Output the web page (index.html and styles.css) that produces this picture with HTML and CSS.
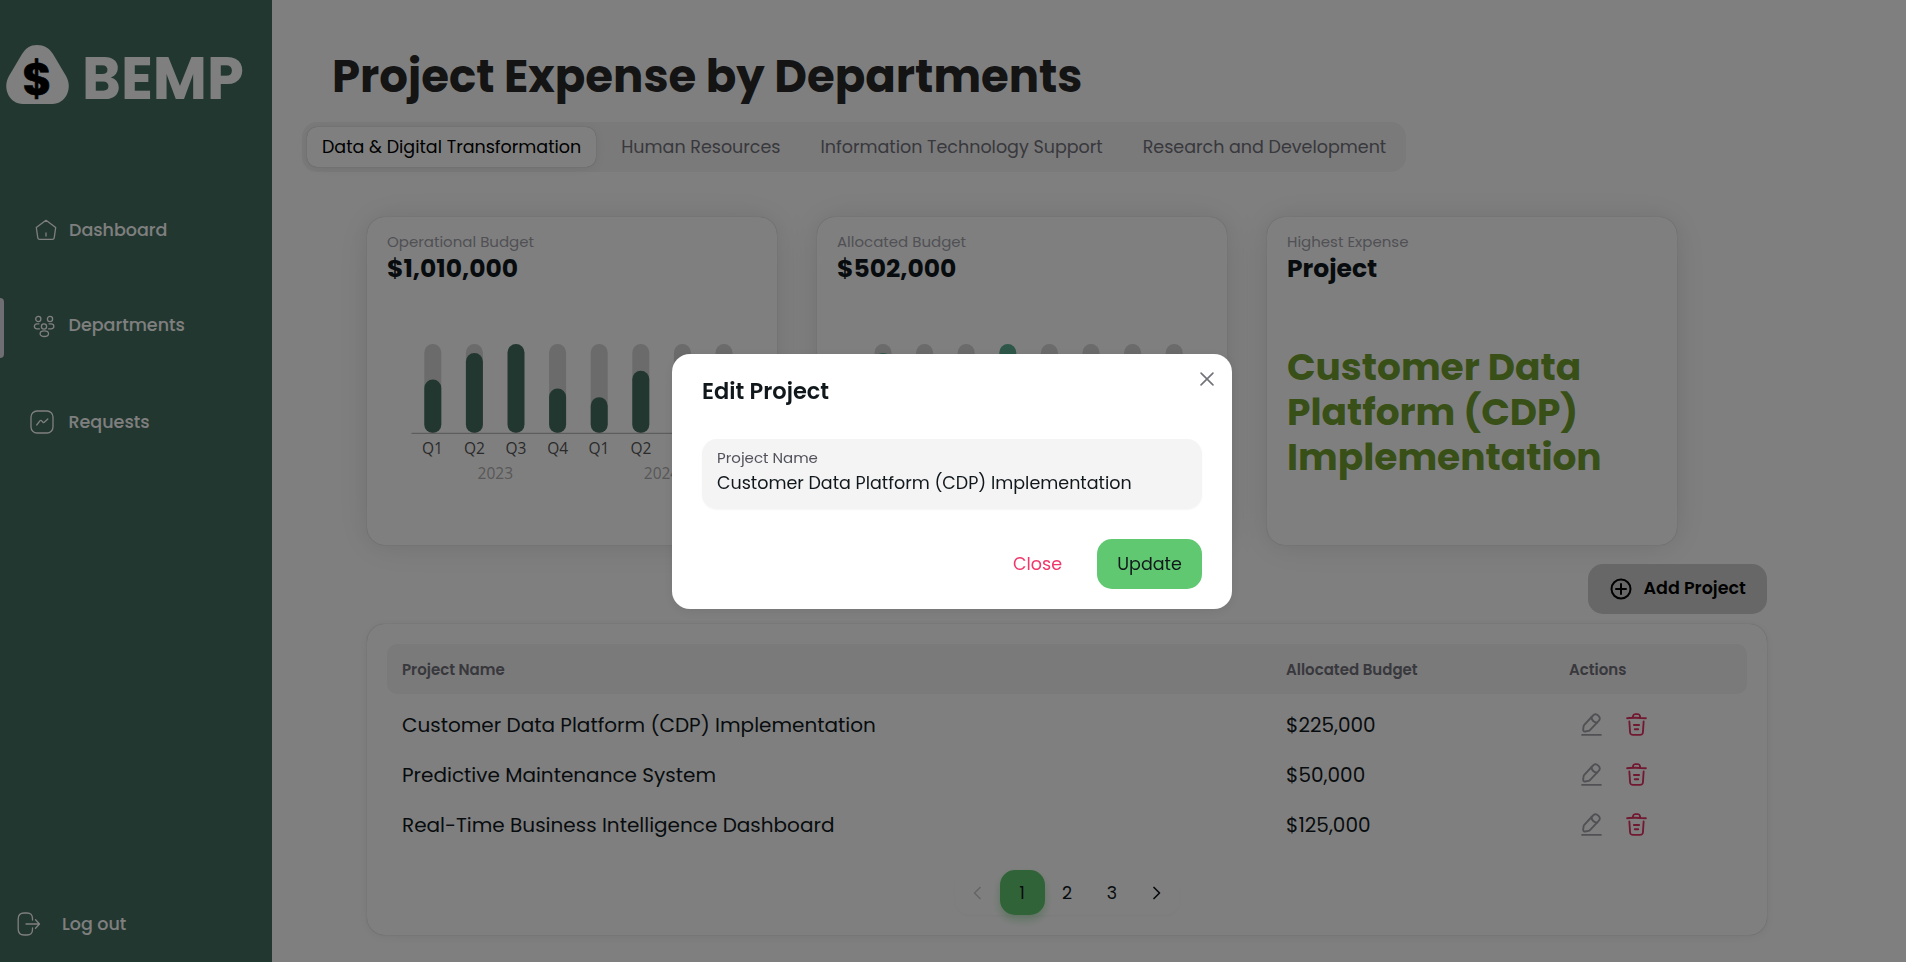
FILE: index.html
```html
<!DOCTYPE html>
<html lang="en">
<head>
<meta charset="utf-8">
<title>BEMP</title>
<link rel="stylesheet" href="styles.css">
</head>
<body>
<svg class="defs" aria-hidden="true">
  <symbol id="edit" viewBox="0 0 20 20"><g fill="none" stroke="currentColor" stroke-width="1.5" stroke-linecap="round" stroke-linejoin="round"><path d="M11.05 3 4.21 10.24c-.26.28-.51.82-.56 1.19l-.31 2.7c-.11.98.59 1.64 1.56 1.48l2.68-.46c.38-.07.9-.34 1.16-.63l6.84-7.24c1.19-1.25 1.72-2.67-.12-4.41C13.63 1.14 12.23 1.75 11.05 3Z"/><path d="M9.91 4.21c.36 2.3 2.22 4.06 4.54 4.29M2.5 18.33h15"/></g></symbol>
  <symbol id="trash" viewBox="0 0 20 20"><g fill="none" stroke="currentColor" stroke-width="1.5" stroke-linecap="round" stroke-linejoin="round"><path d="M17.5 4.98C14.73 4.71 11.93 4.57 9.15 4.57c-1.65 0-3.3.08-4.95.25l-1.7.16M7.08 4.14l.19-1.09c.13-.79.23-1.38 1.64-1.38h2.18c1.41 0 1.52.62 1.64 1.39l.19 1.08M15.71 7.62l-.54 8.39c-.1 1.31-.17 2.32-2.5 2.32H7.33C5 18.33 4.93 17.32 4.83 16.01l-.54-8.39M8.61 13.75h2.77M7.92 10.42h4.16"/></g></symbol>
</svg>
<div class="app">
  <aside class="sidebar">
    <div class="brand">
      <svg class="brand-mark" viewBox="0 0 63 59"><path fill="#fff" d="M31 0C38 0 43 3 47 9L60 31C67 43 60 59 46 59H17C3 59-4 43 3 31L16 9C20 3 24 0 31 0Z"/><text x="31" y="49.500" text-anchor="middle" class="brand-dollar">$</text></svg>
      <span class="brand-name">BEMP</span>
    </div>
    <nav class="nav">
      <a class="nav-item nav-home"><svg viewBox="0 0 22 22" width="22" height="22"><path d="M1.300 8.500 11 1.300l9.700 7.200-1.500 10.300q-.3 1.500-1.800 1.500H4.600q-1.500 0-1.800-1.500ZM11 14v3"/></svg>Dashboard</a>
      <a class="nav-item nav-dept active"><svg viewBox="0 0 24 24" width="24" height="24"><circle cx="6.300" cy="4" r="2.600"/><circle cx="18" cy="4" r="2.600"/><circle cx="12" cy="11.500" r="2.600"/><ellipse cx="12.300" cy="18.700" rx="4.200" ry="2.800"/><path d="M7 8.800H5c-3.500 0-3.500 5 0 5h2.500M17 8.800h2c3.800 0 3.800 5 0 5h-2.500"/></svg>Departments</a>
      <a class="nav-item nav-req"><svg viewBox="0 0 24 24" width="24" height="24"><rect x="1" y="1" width="22" height="22" rx="6"/><path d="m6.700 15 3.400-4.300q.6-.7 1.300-.1l1.600 1.700q.7.700 1.300-.1L17.800 9"/></svg>Requests</a>
    </nav>
    <a class="nav-item logout"><svg viewBox="0 0 24 24" width="24" height="24"><path d="M15.500 8V6.500Q15.500 1 10 1H7Q1.200 1 1.200 7v10q0 6 5.800 6h3q5.500 0 5.500-5.500V16M9 12h13.500M18.500 7.800l4 4.200-4 4.200"/></svg>Log out</a>
  </aside>
  <main class="main">
    <h1 class="title">Project Expense by Departments</h1>
    <div class="tabs">
      <button class="tab selected">Data &amp; Digital Transformation</button>
      <button class="tab">Human Resources</button>
      <button class="tab">Information Technology Support</button>
      <button class="tab">Research and Development</button>
    </div>
    <section class="cards">
      <article class="card">
        <p class="card-label">Operational Budget</p>
        <p class="card-value">$1,010,000</p>
        <svg class="chart" viewBox="0 0 370 150">
          <g class="track"><rect x="37.300" y="4" width="17" height="89" rx="8.500"/><rect x="78.900" y="4" width="17" height="89" rx="8.500"/><rect x="162.100" y="4" width="17" height="89" rx="8.500"/><rect x="203.700" y="4" width="17" height="89" rx="8.500"/><rect x="245.300" y="4" width="17" height="89" rx="8.500"/><rect x="286.900" y="4" width="17" height="89" rx="8.500"/><rect x="328.500" y="4" width="17" height="89" rx="8.500"/></g>
          <g class="fill"><rect x="37.300" y="39.600" width="17" height="53.400" rx="8.500"/><rect x="78.900" y="13" width="17" height="80" rx="8.500"/><rect x="120.500" y="4" width="17" height="89" rx="8.500"/><rect x="162.100" y="48.500" width="17" height="44.500" rx="8.500"/><rect x="203.700" y="57.300" width="17" height="35.700" rx="8.500"/><rect x="245.300" y="30.800" width="17" height="62.200" rx="8.500"/></g>
          <path class="axis" d="M24.500 93.300H358"/>
          <g class="quarter"><text x="45.500" y="114">Q1</text><text x="87.500" y="114">Q2</text><text x="129" y="114">Q3</text><text x="170.700" y="114">Q4</text><text x="212" y="114">Q1</text><text x="254" y="114">Q2</text></g>
          <g class="year"><text x="108.300" y="138.500">2023</text><text x="274.500" y="138.500">2024</text></g>
        </svg>
      </article>
      <article class="card">
        <p class="card-label">Allocated Budget</p>
        <p class="card-value">$502,000</p>
        <svg class="chart" viewBox="0 0 370 150">
          <g class="track"><rect x="37.500" y="4" width="17" height="89" rx="8.500"/><rect x="79.100" y="4" width="17" height="89" rx="8.500"/><rect x="120.700" y="4" width="17" height="89" rx="8.500"/><rect x="203.900" y="4" width="17" height="89" rx="8.500"/><rect x="245.500" y="4" width="17" height="89" rx="8.500"/><rect x="287.100" y="4" width="17" height="89" rx="8.500"/><rect x="328.700" y="4" width="17" height="89" rx="8.500"/></g>
          <g class="fill mint"><rect x="37.500" y="13" width="17" height="80" rx="8.500"/><rect x="162.300" y="4" width="17" height="89" rx="8.500"/></g>
        </svg>
      </article>
      <article class="card">
        <p class="card-label">Highest Expense</p>
        <p class="card-value">Project</p>
        <p class="highlight">Customer Data Platform (CDP) Implementation</p>
      </article>
    </section>
    <div class="toolbar"><button class="add"><svg viewBox="0 0 22 22" width="22" height="22"><circle cx="11" cy="11" r="9.500"/><path d="M11 6v10M6 11h10"/></svg><span>Add Project</span></button></div>
    <section class="panel">
      <div class="row head"><span>Project Name</span><span>Allocated Budget</span><span>Actions</span></div>
      <div class="row"><span class="cell">Customer Data Platform (CDP) Implementation</span><span class="cell">$225,000</span><span class="actions"><svg class="ic"><use href="#edit"/></svg><svg class="ic del"><use href="#trash"/></svg></span></div>
      <div class="row"><span class="cell">Predictive Maintenance System</span><span class="cell">$50,000</span><span class="actions"><svg class="ic"><use href="#edit"/></svg><svg class="ic del"><use href="#trash"/></svg></span></div>
      <div class="row"><span class="cell">Real-Time Business Intelligence Dashboard</span><span class="cell">$125,000</span><span class="actions"><svg class="ic"><use href="#edit"/></svg><svg class="ic del"><use href="#trash"/></svg></span></div>
      <div class="pager"><span class="page prev"><svg viewBox="0 0 8 14" width="8" height="14"><path d="M7 1.500 1.500 7 7 12.500"/></svg></span><span class="page current">1</span><span class="page">2</span><span class="page">3</span><span class="page"><svg viewBox="0 0 8 14" width="8" height="14"><path d="M1 1.500 6.500 7 1 12.500"/></svg></span></div>
    </section>
  </main>
</div>
<div class="overlay">
  <div class="modal" role="dialog">
    <svg class="close-x" viewBox="0 0 13 13"><path d="m1 1 11 11M12 1 1 12"/></svg>
    <h2 class="modal-title">Edit Project</h2>
    <label class="field"><span class="field-label">Project Name</span><span class="field-value">Customer Data Platform (CDP) Implementation</span></label>
    <div class="modal-actions"><button class="btn close">Close</button><button class="btn update">Update</button></div>
  </div>
</div>
</body>
</html>
```
FILE: styles.css
```css
* { box-sizing: border-box; margin: 0; padding: 0; }
body { font-family: Poppins, Inter, "Open Sans", sans-serif; font-size: 17.5px; color: #11181c; background: #fff; overflow: hidden; }
button { font: inherit; color: inherit; border: 0; background: none; white-space: nowrap; }
.defs { display: none; }
.app { display: flex; height: 962px; }

.sidebar { width: 272px; flex: none; background: #446e5e; color: #fff; display: flex; flex-direction: column; }
.brand { display: flex; align-items: center; padding: 45px 0 0 6px; height: 104px; }
.brand-mark { width: 63px; height: 59px; flex: none; overflow: visible; }
.brand-dollar { font-size: 45px; font-weight: 700; fill: #000; stroke: #000; stroke-width: .6; }
.brand-name { font-size: 59px; font-weight: 700; line-height: 59px; margin-left: 13px; padding-top: 7px; }
.nav { padding-top: 96px; }
.nav-item { display: flex; align-items: center; height: 60px; font-weight: 500; }
.nav-item svg { flex: none; fill: none; stroke: currentColor; stroke-width: 1.3; stroke-linecap: round; stroke-linejoin: round; }
.nav-home { padding-left: 35px; gap: 12px; }
.nav-dept { position: relative; margin-top: 35px; padding-left: 32px; gap: 12.5px; }
.nav-dept svg { margin-top: 3px; }
.nav-dept::before { content: ""; position: absolute; left: 0; top: 3px; width: 4px; height: 60px; border-radius: 0 4px 4px 0; background: #dedce4; }
.nav-req { margin-top: 37px; padding-left: 30px; gap: 14.5px; }
.logout { margin: auto 0 8px; padding-left: 16.5px; gap: 21.5px; }

.main { flex: 1; padding: 54px 139px 0 95px; }
.title { font-size: 45px; line-height: 45px; font-weight: 700; color: #282828; margin-left: -35px; white-space: nowrap; }
.tabs { display: flex; align-items: center; width: 1104px; height: 50px; margin: 23px 0 0 -65px; padding: 5px; background: #f4f4f5; border-radius: 15px; color: #71717a; }
.tab { height: 40px; border-radius: 10px; padding: 0 15px; margin-right: 10px; }
.tab:last-child { margin-right: 0; }
.tab.selected { background: #fff; color: #000; box-shadow: 0 0 6px rgba(0,0,0,.02), 0 2px 12px rgba(0,0,0,.06), 0 0 1px rgba(0,0,0,.3); }

.cards { display: flex; gap: 40px; margin-top: 45px; }
.card { width: 410px; height: 328px; border-radius: 18px; padding: 15px 20px; background: #fff; box-shadow: 0 0 19px rgba(0,0,0,.04), 0 2px 38px rgba(0,0,0,.09), 0 0 1px rgba(0,0,0,.3); }
.card-label { font-size: 15px; line-height: 19px; color: #a1a1aa; }
.card-value { font-size: 25px; line-height: 35px; font-weight: 700; }
.chart { display: block; width: 370px; height: 150px; margin-top: 54px; }
.track { fill: #d6d6d6; }
.fill { fill: #446e5e; }
.mint { fill: #5cae94; }
.axis { stroke: #bbb; stroke-width: 1.3; }
.quarter, .year { font-family: "Open Sans", sans-serif; font-size: 15.5px; text-anchor: middle; fill: #555; }
.year { fill: #b0b0b0; }
.highlight { font-size: 37.5px; line-height: 45px; font-weight: 700; color: #70a030; margin-top: 59px; }

.toolbar { display: flex; justify-content: flex-end; margin-top: 19px; width: 1400px; }
.add { display: flex; align-items: center; width: 179px; height: 50px; padding-left: 21.5px; gap: 12px; border-radius: 15px; background: #cecece; font-weight: 600; color: #000; }
.add svg { fill: none; stroke: #000; stroke-width: 2; stroke-linecap: round; flex: none; }
.add span { padding-bottom: 2px; }
.panel { width: 1400px; height: 311px; margin-top: 10px; padding: 20px; border-radius: 18px; background: #fff; box-shadow: 0 0 6px rgba(0,0,0,.02), 0 2px 12px rgba(0,0,0,.06), 0 0 1px rgba(0,0,0,.3); }
.row { display: grid; grid-template-columns: 884px 283px 1fr; align-items: center; height: 50px; padding-left: 15px; font-size: 20px; white-space: nowrap; }
.row.head { font-size: 15px; font-weight: 600; color: #71717a; background: #f4f4f5; border-radius: 10px; margin-bottom: 5px; }
.cell { padding-top: 2px; }
.actions { display: flex; gap: 20px; padding-left: 10px; }
.ic { width: 25px; height: 25px; color: #a1a1aa; }
.ic.del { color: #e23263; }
.pager { display: flex; width: 225px; height: 45px; margin: 21px auto 0; border-radius: 15px; box-shadow: 0 1px 3px rgba(0,0,0,.04); }
.page { width: 45px; height: 45px; display: flex; align-items: center; justify-content: center; border-radius: 15px; }
.page svg { fill: none; stroke: #11181c; stroke-width: 1.7; stroke-linecap: round; stroke-linejoin: round; }
.page.prev svg { stroke: #ccc; }
.page.current { background: #60c870; box-shadow: 0 5px 9px rgba(96,200,112,.4); }

.overlay { position: fixed; inset: 0; background: rgba(0,0,0,.5); display: flex; align-items: center; justify-content: center; padding: 1px 2px 0 0; }
.modal { position: relative; width: 560px; height: 255px; padding: 20px 30px; border-radius: 18px; background: #fff; box-shadow: 0 2px 12px rgba(0,0,0,.08); }
.close-x { position: absolute; right: 18px; top: 18px; width: 14px; height: 14px; fill: none; stroke: #71717a; stroke-width: 1.5; stroke-linecap: round; }
.modal-title { font-size: 22.5px; line-height: 35px; font-weight: 600; }
.field { display: flex; flex-direction: column; height: 70px; margin-top: 30px; padding: 9px 15px; border-radius: 15px; background: #f4f4f5; box-shadow: 0 1px 2px rgba(0,0,0,.04); white-space: nowrap; }
.field-label { font-size: 15px; line-height: 20px; color: #52525b; }
.field-value { line-height: 30px; }
.modal-actions { display: flex; justify-content: flex-end; margin-top: 30px; gap: 10px; }
.btn { height: 50px; border-radius: 15px; padding-bottom: 1px; }
.close { width: 99px; color: #f0386b; }
.update { width: 105px; background: #60c870; color: #11181c; }
```
